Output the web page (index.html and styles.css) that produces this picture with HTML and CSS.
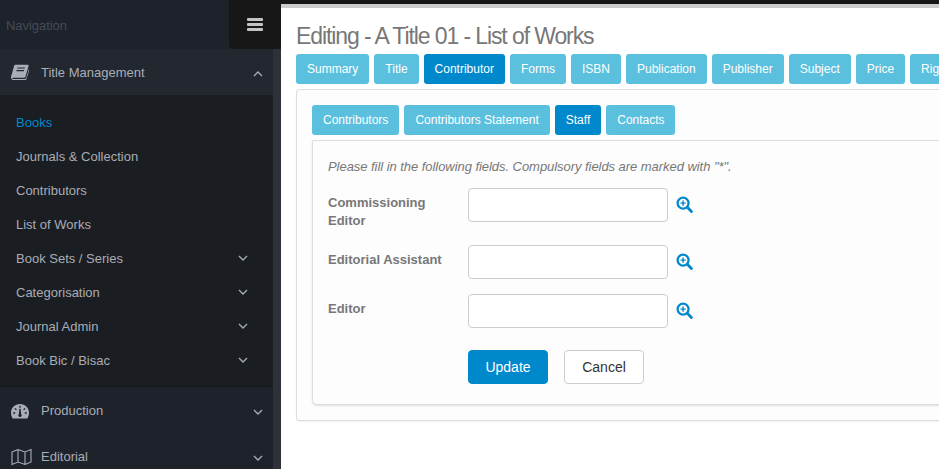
FILE: index.html
```html
<!DOCTYPE html>
<html lang="en">
<head>
<meta charset="utf-8">
<title>Editing - A Title 01 - List of Works</title>
<link rel="stylesheet" href="styles.css">
</head>
<body>
<div class="app">
  <aside class="left">
    <header class="nav-head">
      <span class="nav-label">Navigation</span>
      <button class="toggle" aria-label="Toggle"><span></span><span></span><span></span></button>
    </header>
    <div class="left-body">
      <nav class="sidebar">
        <div class="menu-row menu-open">
          <svg class="menu-icon" viewBox="0 0 18 16"><path fill="#a9adb5" d="M4.6 0.8h12.100c.8 0 1.100.6.9 1.300l-3 10.200c-.3 1-.9 1.500-2 1.500H2.100c-.5 0-.8.3-.8.6 0 .4.4.7 1 .7h11.600c.6 0 1-.3 1.200-.8l3-9.800c.3.3.4.7.3 1.200l-2.900 9.300c-.2.6-.8 1-1.400 1H2.200C1 15.800 0 14.900 0 13.500c0-.3 0-.6.100-.9L3 2.200C3.200 1.400 3.800.8 4.600.8z"/><path stroke="#222730" stroke-width="1.200" d="M6.300 4h7.500M5.500 6.600h7.500"/></svg>
          <span class="menu-text">Title Management</span>
          <svg class="chev chev-main" viewBox="0 0 10 6"><path d="M1 5l4-4 4 4"/></svg>
        </div>
        <ul class="submenu">
          <li class="sub-row sub-active">Books</li>
          <li class="sub-row">Journals &amp; Collection</li>
          <li class="sub-row">Contributors</li>
          <li class="sub-row">List of Works</li>
          <li class="sub-row">Book Sets / Series<svg class="chev" viewBox="0 0 10 6"><path d="M1 1l4 4 4-4"/></svg></li>
          <li class="sub-row">Categorisation<svg class="chev" viewBox="0 0 10 6"><path d="M1 1l4 4 4-4"/></svg></li>
          <li class="sub-row">Journal Admin<svg class="chev" viewBox="0 0 10 6"><path d="M1 1l4 4 4-4"/></svg></li>
          <li class="sub-row">Book Bic / Bisac<svg class="chev" viewBox="0 0 10 6"><path d="M1 1l4 4 4-4"/></svg></li>
        </ul>
        <div class="menu-row">
          <svg class="menu-icon menu-icon-gauge" viewBox="0 0 18 15"><path fill="#a9adb5" d="M9 0c5 0 9 3.900 9 8.800 0 1.900-.5 3.600-1.400 5.200-.2.400-.6.600-1 .6H2.400c-.4 0-.8-.2-1-.6C.5 12.400 0 10.700 0 8.800 0 3.900 4 0 9 0z"/><path stroke="#1e222a" stroke-width="1.300" d="M2.200 9h2M3.900 4.400l1.500 1.500M14.100 4.400l-1.500 1.500M15.800 9h-2M9 1.800v2"/><path fill="#1e222a" d="M8.400 4.800h1.200l.5 5.200a1.700 1.700 0 1 1-2.200 0z"/></svg>
          <span class="menu-text">Production</span>
          <svg class="chev chev-main" viewBox="0 0 10 6"><path d="M1 1l4 4 4-4"/></svg>
        </div>
        <div class="menu-row">
          <svg class="menu-icon menu-icon-map" viewBox="0 0 21 18"><path fill="none" stroke="#a9adb5" stroke-width="1.100" d="M1 4l6-2.500 7 2.500 6-2.500v12.500l-6 2.500-7-2.500-6 2.500zM7 1.500v12.500M14 4v12.500"/></svg>
          <span class="menu-text">Editorial</span>
          <svg class="chev chev-main" viewBox="0 0 10 6"><path d="M1 1l4 4 4-4"/></svg>
        </div>
      </nav>
      <div class="strip"></div>
    </div>
  </aside>
  <main class="main">
    <div class="topbar"></div>
    <div class="content">
      <h1 class="page-title">Editing - A Title 01 - List of Works</h1>
      <div class="tabs">
        <a class="tab">Summary</a>
        <a class="tab">Title</a>
        <a class="tab tab-active">Contributor</a>
        <a class="tab">Forms</a>
        <a class="tab">ISBN</a>
        <a class="tab">Publication</a>
        <a class="tab">Publisher</a>
        <a class="tab">Subject</a>
        <a class="tab">Price</a>
        <a class="tab">Rights</a>
      </div>
      <section class="panel">
        <div class="tabs tabs-sub">
          <a class="tab">Contributors</a>
          <a class="tab">Contributors Statement</a>
          <a class="tab tab-active">Staff</a>
          <a class="tab">Contacts</a>
        </div>
        <form class="inner">
          <p class="hint">Please fill in the following fields. Compulsory fields are marked with "*".</p>
          <div class="field">
            <label class="label">Commissioning Editor</label>
            <input class="input" type="text">
            <svg class="search" viewBox="0 0 18 18"><circle cx="7.500" cy="7.500" r="5.800" fill="none" stroke="#0088cc" stroke-width="2.400"/><path stroke="#0088cc" stroke-width="1.500" d="M4.800 7.500h5.400M7.500 4.800v5.400"/><path stroke="#0088cc" stroke-width="3" stroke-linecap="round" d="M12 12l4.300 4.300"/></svg>
          </div>
          <div class="field">
            <label class="label">Editorial Assistant</label>
            <input class="input" type="text">
            <svg class="search" viewBox="0 0 18 18"><circle cx="7.500" cy="7.500" r="5.800" fill="none" stroke="#0088cc" stroke-width="2.400"/><path stroke="#0088cc" stroke-width="1.500" d="M4.800 7.500h5.400M7.500 4.800v5.400"/><path stroke="#0088cc" stroke-width="3" stroke-linecap="round" d="M12 12l4.300 4.300"/></svg>
          </div>
          <div class="field">
            <label class="label">Editor</label>
            <input class="input" type="text">
            <svg class="search" viewBox="0 0 18 18"><circle cx="7.500" cy="7.500" r="5.800" fill="none" stroke="#0088cc" stroke-width="2.400"/><path stroke="#0088cc" stroke-width="1.500" d="M4.800 7.500h5.400M7.500 4.800v5.400"/><path stroke="#0088cc" stroke-width="3" stroke-linecap="round" d="M12 12l4.300 4.300"/></svg>
          </div>
          <div class="actions">
            <button class="btn btn-primary" type="button">Update</button>
            <button class="btn btn-default" type="button">Cancel</button>
          </div>
        </form>
      </section>
    </div>
  </main>
</div>
</body>
</html>
```
FILE: styles.css
```css
* { box-sizing: border-box; }
html, body { margin: 0; height: 100%; overflow: hidden; }
body { font-family: "Liberation Sans", Arial, sans-serif; background: #fff; color: #777; }
.app { display: flex; height: 469px; overflow: hidden; }
.left { flex: none; width: 281px; display: flex; flex-direction: column; background: #1e222a; }
.nav-head { flex: none; height: 49px; display: flex; align-items: center; justify-content: space-between; background: #1e222a; }
.nav-label { padding: 2px 0 0 6px; font-size: 13px; letter-spacing: -.05px; color: #444b57; }
.toggle { width: 52px; height: 49px; padding: 0; border: 0; border-bottom-left-radius: 5px; background: #171717; display: flex; flex-direction: column; align-items: center; justify-content: center; gap: 2px; }
.toggle span { display: block; width: 16px; height: 3px; border-radius: 1px; background: #c3c3c3; }
.left-body { flex: 1; display: flex; min-height: 0; }
.sidebar { flex: none; width: 273px; background: #1e222a; }
.strip { flex: none; width: 8px; background: #2e3139; }
.menu-row { height: 46px; display: flex; align-items: center; padding-left: 11px; padding-right: 10px; }
.menu-open { background: #222730; }
.menu-icon { width: 18px; height: 16px; flex: none; }
.menu-icon-gauge { height: 15px; margin-top: 2px; }
.menu-icon-map { width: 21px; height: 18px; margin-top: 2px; }
.menu-text { margin-left: 12px; flex: 1; font-size: 13px; color: #a9adb5; }
.menu-icon-map + .menu-text { margin-left: 9px; }
.chev { width: 10px; height: 6px; flex: none; fill: none; stroke: #a9adb5; stroke-width: 1.300; }
.chev-main { margin-top: 4px; }
.submenu { margin: 0; padding: 10px 0 9px; list-style: none; background: #1a1d22; border-bottom: 1px solid #15171b; }
.sub-row { height: 34px; display: flex; align-items: center; justify-content: space-between; padding: 0 25px 0 16px; font-size: 13px; color: #a9adb5; }
.sub-active { color: #0088cc; }
.main { flex: 1; min-width: 0; overflow: hidden; }
.topbar { height: 8px; background: #ccc; border-top: 4px solid #171717; }
.content { width: 900px; padding: 0 0 0 15px; }
.page-title { margin: 15px 0 0; height: 31px; font-size: 23px; line-height: 26px; font-weight: 400; color: #777; letter-spacing: -1.100px; }
.tabs { display: flex; gap: 5px; }
.tab { flex: none; height: 30px; padding: 0 11px; display: flex; align-items: center; border-radius: 3px; background: #5bc0de; color: #fff; font-size: 12px; }
.tabs-sub .tab:last-child { padding-right: 10.400px; }
.tab-active { background: #0088cc; }
.panel { margin-top: 5px; height: 332px; padding: 15px 0 15px 15px; border: 1px solid #ddd; border-radius: 3px 0 0 3px; background: #fdfdfd; box-shadow: 0 1px 2px rgba(0,0,0,.06); }
.inner { margin-top: 5px; height: 265px; padding: 0 15px; border: 1px solid #ddd; border-radius: 0 0 0 5px; background: #fdfdfd; box-shadow: 0 1px 2px rgba(0,0,0,.12); }
.hint { margin: 0; padding-top: 17px; font-size: 13px; letter-spacing: -.05px; line-height: 17px; font-style: italic; color: #777; }
.field { display: flex; align-items: flex-start; margin-top: 15px; }
.hint + .field { margin-top: 13px; }
.label { flex: none; width: 140px; padding: 6px 10px 0 0; font-size: 13px; line-height: 18px; font-weight: 700; color: #777; }
.input { flex: none; width: 200px; height: 34px; border: 1px solid #ccc; border-radius: 4px; background: #fff; }
.search { flex: none; width: 17px; height: 17px; margin: 8px 0 0 8px; }
.actions { display: flex; gap: 16px; margin: 22px 0 0 140px; }
.btn { width: 80px; height: 34px; padding: 0; border-radius: 4px; font: 14px "Liberation Sans", Arial, sans-serif; }
.btn-primary { border: 1px solid #0088cc; background: #0088cc; color: #fff; }
.btn-default { border: 1px solid #ccc; background: #fff; color: #333; }
```
